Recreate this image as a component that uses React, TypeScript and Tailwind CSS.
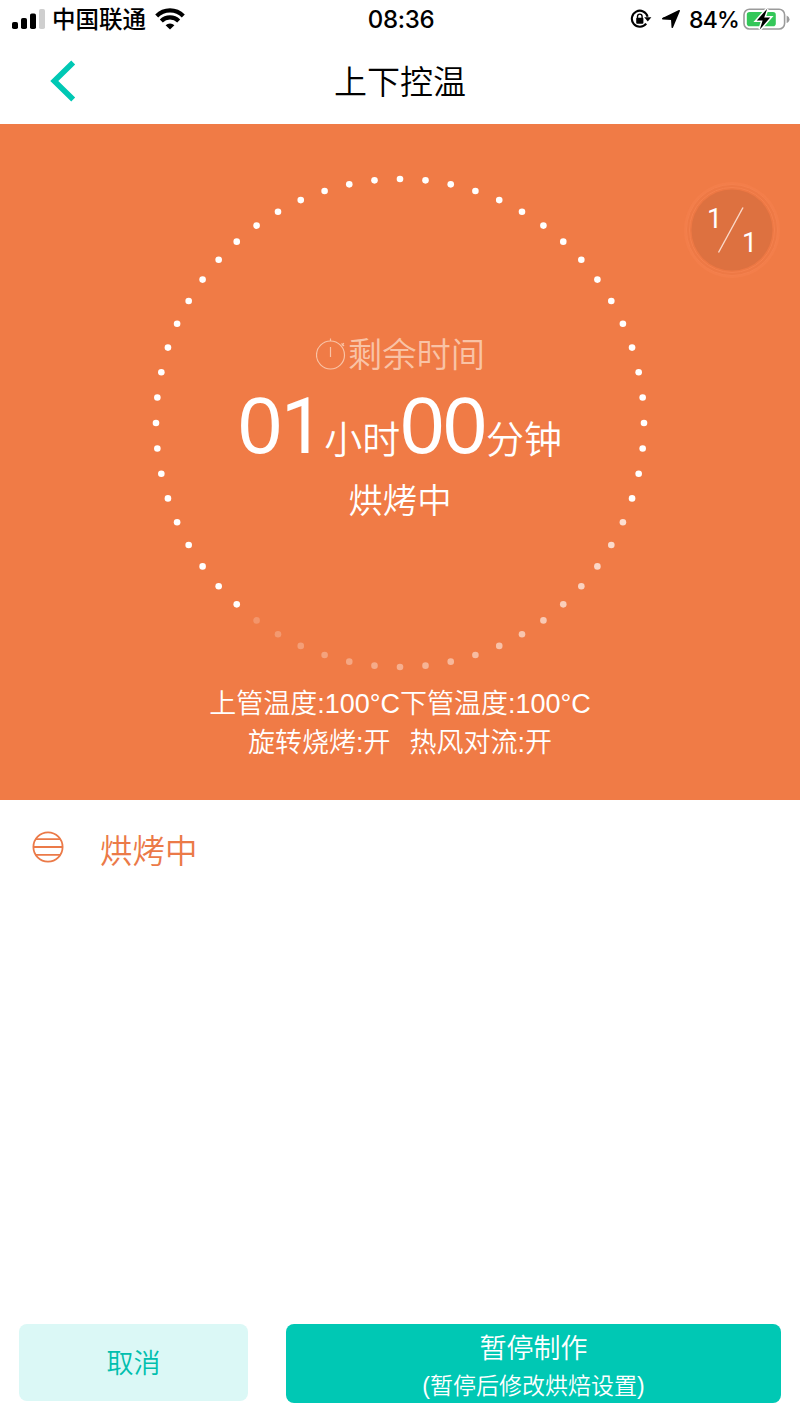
import { useState } from "react"

const DOT_COUNT = 60
const RADIUS = 244
const FADE_START = 19
const FADE_END = 36

// Opacity of a dot on the timer ring, counted clockwise from the top
const dotOpacity = (index: number) => {
  if (index < FADE_START || index > FADE_END) return 1
  return 0.76 - ((index - FADE_START) / (FADE_END - FADE_START)) * 0.56
}

function StatusBar() {
  return (
    <div className="flex h-[38px] items-center justify-between pl-3 pr-[10px] font-['Inter','Noto_Sans_CJK_SC',sans-serif] text-black">
      <div className="flex w-[260px] items-center">
        {/* Signal bars */}
        <svg width="33" height="22" viewBox="0 0 33 22">
          <rect x="0" y="14" width="6" height="7" rx="1.8" />
          <rect x="9" y="10" width="6" height="11" rx="1.8" />
          <rect x="18" y="5.5" width="6" height="15.5" rx="1.8" />
          <rect x="27" y="1" width="6" height="20" rx="1.8" fill="#cfcfcf" />
        </svg>
        <span className="ml-[7px] mt-0.5 text-[23.5px] font-medium leading-[38px]">中国联通</span>
        {/* Wifi */}
        <svg className="ml-[9px]" width="30" height="22" viewBox="0 0 30 22" fill="none" stroke="#000" strokeWidth="4.2">
          <path d="M1.7 7.9A18.8 18.8 0 0 1 28.3 7.9" />
          <path d="M6.3 12.9A12.4 12.4 0 0 1 23.7 12.9" />
          <path d="M15 21.5L10.6 17.3A6.2 6.2 0 0 1 19.4 17.3Z" fill="#000" stroke="none" />
        </svg>
      </div>
      <span className="mt-0.5 text-[24px] font-medium leading-[38px] tracking-[-0.3px]">08:36</span>
      <div className="flex w-[260px] items-center justify-end">
        {/* Rotation lock */}
        <svg width="22" height="20" viewBox="0 0 22 20" fill="none">
          <path d="M17.6 7.7A8 8 0 1 0 16.2 14.6" stroke="#000" strokeWidth="2.1" />
          <path d="M14.2 8.2H21.4L17.8 12.6Z" fill="#000" />
          <rect x="6.2" y="8.8" width="7.2" height="6" rx="1" fill="#000" />
          <path d="M7.5 9.4V7.4A2.3 2.3 0 0 1 12.1 7.4V9.4" stroke="#000" strokeWidth="1.4" />
        </svg>
        {/* Location */}
        <svg className="ml-2.5" width="18" height="18" viewBox="0 0 18 18">
          <path d="M17.2 0.8L10.3 17.2L9.8 9.2L0.8 8.6Z" stroke="#000" strokeWidth="1.6" strokeLinejoin="round" />
        </svg>
        <span className="ml-[9px] mt-px text-[23px] font-medium leading-[38px] tracking-[-0.8px]">84%</span>
        {/* Battery */}
        <svg className="ml-1" width="47" height="24" viewBox="0 0 47 24">
          <rect x="1" y="2.2" width="40.6" height="19.8" rx="5.5" fill="#fff" stroke="#9b9b9b" strokeWidth="1.6" />
          <path d="M43.6 8.5V16Q46.5 15 46.5 12.2Q46.5 9.5 43.6 8.5Z" fill="#9b9b9b" />
          <rect x="3.8" y="5" width="29" height="14.2" rx="2.8" fill="#34c759" />
          <path d="M24.2 1.8L13.8 13.4H19.6L16.8 22.4L27.2 10.6H21.2Z" stroke="#fff" strokeWidth="3" />
          <path d="M24.2 1.8L13.8 13.4H19.6L16.8 22.4L27.2 10.6H21.2Z" />
        </svg>
      </div>
    </div>
  )
}

function TimerRing() {
  return (
    <svg className="absolute inset-0" width="500" height="500" viewBox="-250 -250 500 500" fill="#fff">
      {Array.from({ length: DOT_COUNT }, (_, i) => {
        const angle = (i * 2 * Math.PI) / DOT_COUNT
        return (
          <circle key={i} cx={RADIUS * Math.sin(angle)} cy={-RADIUS * Math.cos(angle)} r="3.3" opacity={dotOpacity(i)} />
        )
      })}
    </svg>
  )
}

export default function App() {
  const [paused, setPaused] = useState(false)

  return (
    <div className="flex h-[1422px] w-[800px] flex-col bg-white font-['Liberation_Sans','Noto_Sans_CJK_SC',sans-serif] font-[350]">
      <StatusBar />

      {/* Title bar */}
      <header className="grid h-[86px] grid-cols-[100px_1fr_100px] items-center">
        <button className="pl-[50px]">
          <svg width="26" height="42" viewBox="0 0 26 42" fill="none" stroke="#00c8b4" strokeWidth="5.6">
            <path d="M23.2 2.5L4.3 21L23.2 39.5" />
          </svg>
        </button>
        <h1 className="mt-1 text-center text-[33px] leading-[48px] text-black">上下控温</h1>
      </header>

      <main className="relative flex h-[676px] flex-col items-center bg-[#f07b46] text-white">
        {/* Step counter */}
        <div className="absolute right-[20px] top-[58px]">
          <svg className="font-['Roboto',sans-serif]" width="96" height="96" viewBox="0 0 96 96">
            <circle cx="48" cy="48" r="48" fill="#f37e4a" />
            <circle cx="48" cy="48" r="45.5" fill="#ee7945" stroke="#f4814e" strokeWidth="1" />
            <circle cx="48" cy="48" r="42.5" fill="#ed7844" stroke="#f4814e" strokeWidth="1" />
            <circle cx="48" cy="48" r="40.5" fill="#dd7140" />
            <path d="M34.5 70.5L59 25.5" stroke="#fbd9c9" strokeWidth="1.4" />
            <text x="23" y="46" fontSize="27" fontWeight="400" fill="#fff">1</text>
            <text x="58" y="69.5" fontSize="27" fontWeight="400" fill="#fff">1</text>
          </svg>
        </div>

        <div className="relative mt-[49px] flex h-[500px] w-[500px] flex-col items-center">
          <TimerRing />
          <div className="mt-[156px] flex h-[50px] items-center pl-px text-[34.3px] leading-[50px] text-[#f9c3a6]">
            <svg className="mr-[2px]" width="30" height="32" viewBox="0 0 30 32" fill="none" stroke="currentColor" strokeWidth="1.2">
              <circle cx="14.5" cy="17" r="14" />
              <path d="M14.5 3V0.5M14.5 9V19M25.5 5.5L28 8M26 7.5L27.8 5" />
            </svg>
            <span className="mt-0.5">剩余时间</span>
          </div>
          <div className="mt-[6px] flex h-[76px] items-baseline whitespace-nowrap leading-[82px]">
            <span className="text-[79px] tracking-[-1px]">
              0<span className="font-['Roboto',sans-serif] text-[77px] font-normal tracking-normal">1</span>
            </span>
            <span className="text-[38px]">小时</span>
            <span className="text-[79px] tracking-[-1px]">00</span>
            <span className="text-[38px]">分钟</span>
          </div>
          <p className="mt-[15px] text-[34.3px] leading-[50px]">{paused ? "已暂停" : "烘烤中"}</p>
        </div>

        <div className="mt-[12px] flex flex-col items-center text-[27px] leading-[39px]">
          <p>上管温度:100°C下管温度:100°C</p>
          <p className="flex gap-[19px]">
            <span>旋转烧烤:开</span>
            <span>热风对流:开</span>
          </p>
        </div>
      </main>

      {/* Current stage */}
      <section className="flex h-[100px] items-center pl-8 text-[#eb7a48]">
        <svg className="-mt-1.5" width="32" height="32" viewBox="0 0 32 32" fill="none" stroke="currentColor" strokeWidth="1.8">
          <circle cx="16" cy="16" r="14.6" />
          <path d="M4 8.2H28M1.5 16H30.5M4 23.8H28" />
        </svg>
        <span className="ml-9 mt-1 text-[32.5px] leading-[48px]">烘烤中</span>
      </section>

      <footer className="mt-auto flex items-start gap-[38px] px-[19px] pb-[19px]">
        <button className="h-[77px] w-[229px] rounded-lg bg-[#dbf8f6] pt-1 text-[27px] text-[#00bfae]">取消</button>
        <button
          onClick={() => setPaused(!paused)}
          className="flex h-[79px] flex-1 flex-col items-center rounded-lg bg-[#00c8b4] text-white"
        >
          <span className="mt-[5px] text-[27px] leading-10">暂停制作</span>
          <span className="text-[23px] leading-[35px]">(暂停后修改烘焙设置)</span>
        </button>
      </footer>
    </div>
  )
}
